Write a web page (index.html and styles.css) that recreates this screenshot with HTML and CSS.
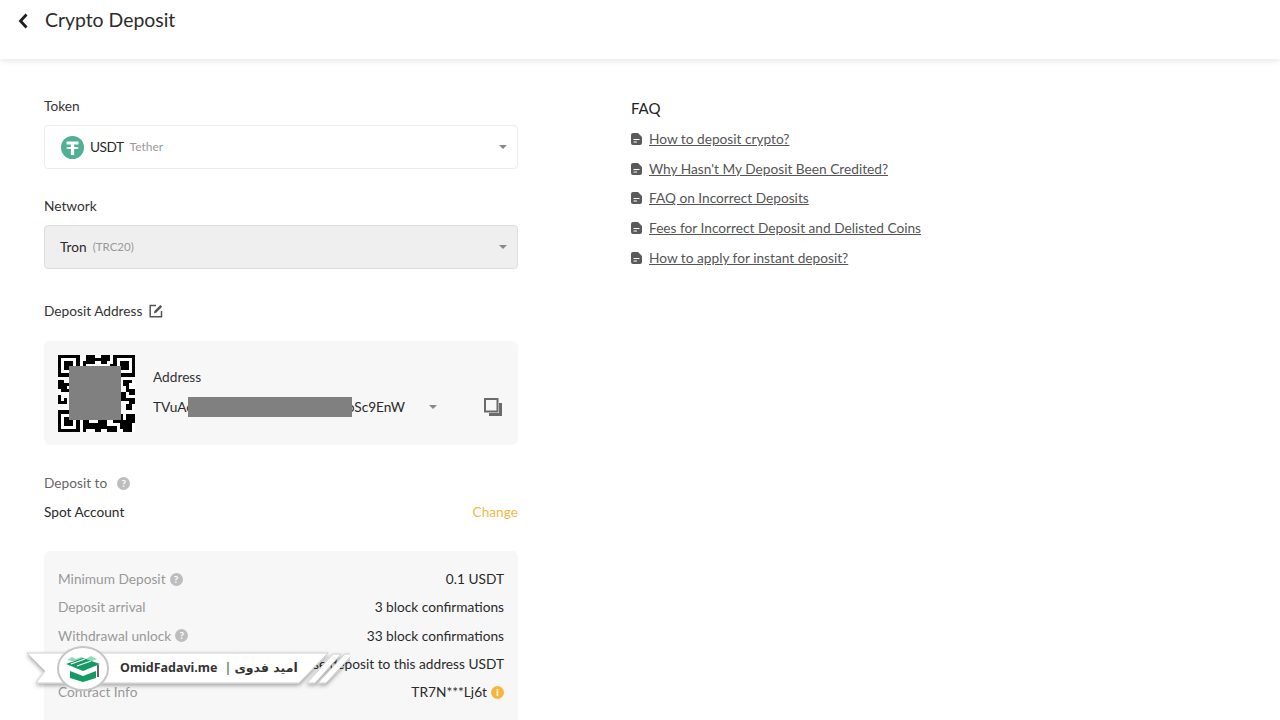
FILE: index.html
```html
<!DOCTYPE html>
<html lang="en">
<head>
<meta charset="utf-8">
<title>Crypto Deposit</title>
<link rel="stylesheet" href="styles.css">
</head>
<body>
<header class="topbar">
  <svg class="back" viewBox="0 0 12 16" width="12" height="16"><path d="M8.500 1.500 L2.500 8 L8.500 14.500" fill="none" stroke="#1e1e1e" stroke-width="2.800"/></svg>
  <h1 class="title">Crypto Deposit</h1>
</header>
<main class="page">
  <section class="form">
    <div class="label">Token</div>
    <div class="select">
      <svg class="tether" viewBox="0 0 23 23" width="23" height="23"><circle cx="11.500" cy="11.500" r="11.500" fill="#50af95"/><path d="M5.500 5.500h12v3h-4.400v2.200c2.600.1 4.600.6 4.600 1.200s-2 1.100-4.600 1.200V19h-3.200v-5.900c-2.600-.1-4.600-.6-4.600-1.200s2-1.100 4.600-1.200V8.500H5.500z" fill="#fff"/></svg>
      <span class="sel-main sel-token">USDT</span><span class="sel-sub">Tether</span>
      <span class="caret"></span>
    </div>
    <div class="label label-network">Network</div>
    <div class="select select-disabled">
      <span class="sel-main">Tron</span><span class="sel-sub sel-sub-net">(TRC20)</span>
      <span class="caret"></span>
    </div>
    <div class="label label-address">Deposit Address
      <svg class="edit" viewBox="0 0 14 14" width="14" height="14"><path d="M7 1.500H1.200v11.300h11.300V7" fill="none" stroke="#555" stroke-width="1.500"/><path d="M5 9.200l.4-2.300L11.400.9l1.800 1.800-6 6z" fill="#555"/></svg>
    </div>
    <div class="address-card">
      <div class="qr">
        <svg viewBox="0 0 25 25" width="77" height="77" shape-rendering="crispEdges">
          <path fill="#000" d="M0 0h7v7H0zM1 1v5h5V1zM2 2h3v3H2zM18 0h7v7h-7zM19 1v5h5V1zM20 2h3v3h-3zM0 18h7v7H0zM1 19v5h5v-5zM2 20h3v3H2z" fill-rule="evenodd"/>
          <path fill="#000" d="M9 0h3v1h2V0h3v2h-1v1h-2V2h-2v1H9zM8 2h1v2H8zM17 3h1v2h-1zM0 8h2v1h2v1H3v1h1v1H1v-1H0zM0 13h1v2h2v1H0zM2 14h1v1H2zM21 8h3v1h-1v2h2v2h-2v-1h-1v-2h-1zM20 12h2v2h3v2h-2v-1h-3zM22 16h2v2h-2zM8 21h2v1h3v-1h3v2h3v2h-3v-1h-2v1h-2v-1H9v1H8zM18 19h3v2h1v-2h3v3h-1v3h-3v-1h-1v-2h-2zM8 18h1v2H8z"/>
        </svg>
        <div class="redact redact-qr"></div>
      </div>
      <div class="addr-info">
        <div class="addr-label">Address</div>
        <div class="addr-row">
          <span class="addr-text"><span>TVuAc</span><span>oSc9EnW</span><span class="redact redact-addr"></span></span>
          <span class="caret caret-addr"></span>
          <svg class="copy" viewBox="0 0 18 18" width="18" height="18"><path d="M1 1h12.500v12.500H1z" fill="none" stroke="#6b6b6b" stroke-width="2"/><path d="M5 16.500h11.500V5" fill="none" stroke="#6b6b6b" stroke-width="3"/></svg>
        </div>
      </div>
    </div>
    <div class="deposit-to">Deposit to <span class="help help-lg">?</span></div>
    <div class="account-row"><span>Spot Account</span><a class="change">Change</a></div>
    <div class="info-card">
      <div class="info-row"><span class="k">Minimum Deposit <span class="help">?</span></span><span class="v">0.1 USDT</span></div>
      <div class="info-row"><span class="k">Deposit arrival</span><span class="v">3 block confirmations</span></div>
      <div class="info-row"><span class="k">Withdrawal unlock <span class="help">?</span></span><span class="v">33 block confirmations</span></div>
      <div class="info-row"><span class="k">Note</span><span class="v">Please deposit to this address USDT</span></div>
      <div class="info-row"><span class="k">Contract Info</span><span class="v">TR7N***Lj6t <span class="help help-warn">i</span></span></div>
    </div>
  </section>
  <aside class="faq">
    <h2 class="faq-title">FAQ</h2>
    <ul class="faq-list">
      <li><svg class="doc" viewBox="0 0 11 12" width="11" height="12"><path d="M2 0H7l4 4v6A2 2 0 0 1 9 12H2A2 2 0 0 1 0 10V2A2 2 0 0 1 2 0zM2.500 6v1H8.500V6zM2.500 8.500v1H6v-1z" fill="#5a5a5a" fill-rule="evenodd"/></svg><a>How to deposit crypto?</a></li>
      <li><svg class="doc" viewBox="0 0 11 12" width="11" height="12"><path d="M2 0H7l4 4v6A2 2 0 0 1 9 12H2A2 2 0 0 1 0 10V2A2 2 0 0 1 2 0zM2.500 6v1H8.500V6zM2.500 8.500v1H6v-1z" fill="#5a5a5a" fill-rule="evenodd"/></svg><a>Why Hasn't My Deposit Been Credited?</a></li>
      <li><svg class="doc" viewBox="0 0 11 12" width="11" height="12"><path d="M2 0H7l4 4v6A2 2 0 0 1 9 12H2A2 2 0 0 1 0 10V2A2 2 0 0 1 2 0zM2.500 6v1H8.500V6zM2.500 8.500v1H6v-1z" fill="#5a5a5a" fill-rule="evenodd"/></svg><a>FAQ on Incorrect Deposits</a></li>
      <li><svg class="doc" viewBox="0 0 11 12" width="11" height="12"><path d="M2 0H7l4 4v6A2 2 0 0 1 9 12H2A2 2 0 0 1 0 10V2A2 2 0 0 1 2 0zM2.500 6v1H8.500V6zM2.500 8.500v1H6v-1z" fill="#5a5a5a" fill-rule="evenodd"/></svg><a>Fees for Incorrect Deposit and Delisted Coins</a></li>
      <li><svg class="doc" viewBox="0 0 11 12" width="11" height="12"><path d="M2 0H7l4 4v6A2 2 0 0 1 9 12H2A2 2 0 0 1 0 10V2A2 2 0 0 1 2 0zM2.500 6v1H8.500V6zM2.500 8.500v1H6v-1z" fill="#5a5a5a" fill-rule="evenodd"/></svg><a>How to apply for instant deposit?</a></li>
    </ul>
  </aside>
</main>
<div class="watermark">
  <svg class="ribbon" viewBox="0 0 330 70" width="330" height="70">
    <defs><filter id="sh" x="-5%" y="-20%" width="110%" height="150%"><feDropShadow dx="0" dy="2" stdDeviation="2" flood-color="#000" flood-opacity=".35"/></filter></defs>
    <g filter="url(#sh)" fill="#fff" stroke="#cfcfcf" stroke-width="1">
      <path d="M7 13H308L279 43H16L25 31z"/>
      <path d="M287 43L313 14h8L295 43z"/>
      <path d="M298 43L325 14h8L306 43z"/>
    </g>
    <ellipse cx="63" cy="28.500" rx="25" ry="21.500" fill="#fff" stroke="#c6c6c6" stroke-width="2"/>
    <path d="M47 20l5-3 4 2 5-2 5 2 5-3 6 3-5 2H52z" fill="#8fdcb6"/>
    <path d="M46 24l17-6 17 6-17 7z" fill="#159a63"/>
    <path d="M51 24l14-5M57 26l14-5" stroke="#fff" stroke-width="1.200"/>
    <path d="M50 31l13 5 13-5v7l-13 4-13-4z" fill="#159a63"/>
    <path d="M78 25v12" stroke="#333" stroke-width="1.500"/>
  </svg>
  <div class="wm-text"><span>OmidFadavi.me</span><span class="wm-sep">|</span><span class="wm-fa" lang="fa" dir="rtl">امید فدوی</span></div>
</div>
</body>
</html>
```
FILE: styles.css
```css
* { box-sizing: border-box; }
html, body { margin: 0; height: 720px; overflow: hidden; }
body {
  background: #fff;
  color: #2a2a2a;
  font-family: Lato, "Noto Sans", sans-serif;
  font-size: 13.700px;
  line-height: 20px;
  position: relative;
}
.topbar {
  height: 59px;
  padding: 6px 0 0 18px;
  display: flex;
  align-items: flex-start;
  background: #fff;
  box-shadow: 0 2px 6px rgba(0,0,0,.1);
}
.back { margin-top: 7px; }
.title { margin: 0 0 0 15px; font-size: 19.400px; line-height: 28px; font-weight: 400; color: #2b2b2b; }
.page { display: flex; padding: 37px 0 0 44px; }
.form { width: 474px; flex: none; }
.faq { margin-left: 113px; }
.label { height: 20px; color: #333; }
.label-network { margin-top: 27px; }
.label-address { margin-top: 32px; display: flex; align-items: center; gap: 7px; }
.select {
  margin-top: 9px;
  height: 44px;
  border: 1px solid #ececec;
  border-radius: 4px;
  padding: 0 10px 0 16px;
  display: flex;
  align-items: center;
  position: relative;
}
.select-disabled { background: #efefef; border-color: #dedede; padding-left: 15px; }
.tether { margin-right: 6px; }
.sel-token { letter-spacing: -.5px; }
.sel-sub { font-size: 12px; color: #999; margin-left: 6px; }
.sel-sub-net { font-size: 11.500px; }
.caret {
  margin-left: auto;
  width: 0; height: 0;
  border-left: 4px solid transparent;
  border-right: 4px solid transparent;
  border-top: 4px solid #888;
}
.address-card {
  margin-top: 20px;
  height: 104px;
  background: #f7f7f7;
  border-radius: 6px;
  padding: 14px 14px 0 14px;
  display: flex;
}
.qr { width: 77px; height: 77px; background: #fff; position: relative; flex: none; }
.qr svg { display: block; }
.redact { background: #808080; position: absolute; }
.redact-qr { left: 11px; top: 11px; width: 52px; height: 54px; }
.addr-info { margin-left: 18px; flex: 1; padding-top: 12px; }
.addr-label { color: #333; }
.addr-row { display: flex; align-items: center; margin-top: 10px; }
.addr-text { position: relative; width: 252px; display: flex; justify-content: space-between; white-space: nowrap; }
.redact-addr { left: 35px; top: 0; width: 164px; height: 20px; }
.caret-addr { margin-left: 24px; }
.copy { margin-left: 47px; }
.deposit-to { margin-top: 28px; color: #666; display: flex; align-items: center; gap: 6px; }
.help {
  display: inline-flex; align-items: center; justify-content: center;
  width: 13px; height: 13px; border-radius: 50%;
  background: #bdbdbd; color: #fff; font-size: 10px; line-height: 13px; font-weight: 700;
}
.help-lg { margin-left: 4px; }
.help-warn { background: #f5b73b; }
.account-row { margin-top: 9px; display: flex; justify-content: space-between; color: #2a2a2a; }
.change { color: #f7b84b; }
.info-card {
  margin-top: 29px;
  height: 200px;
  background: #f7f7f7;
  border-radius: 6px;
  padding: 18px 14px;
}
.info-row { display: flex; justify-content: space-between; height: 28.300px; line-height: 20px; }
.k, .v { display: flex; align-items: center; gap: 4px; height: 20px; }
.k { color: #999; }
.faq-title { margin: 0; font-size: 15px; line-height: 24px; font-weight: 400; color: #222; }
.faq-list { list-style: none; margin: 9px 0 0; padding: 0; display: flex; flex-direction: column; gap: 9.700px; }
.faq-list li { display: flex; align-items: center; gap: 7px; height: 20px; }
.faq-list a { color: #555; text-decoration: underline; }
.doc { flex: none; }
.watermark { position: absolute; left: 20px; top: 640px; width: 330px; height: 70px; }
.ribbon { display: block; }
.wm-text {
  position: absolute; left: 100px; top: 18px;
  display: flex; align-items: center; gap: 7px;
  font-family: "Noto Sans", "DejaVu Sans", sans-serif;
  font-size: 12.500px; line-height: 20px; font-weight: 700; color: #333;
  white-space: nowrap;
}
.wm-fa { font-family: "DejaVu Sans", sans-serif; font-size: 12.500px; margin-left: -4px; }
.wm-sep { font-weight: 400; }
```
